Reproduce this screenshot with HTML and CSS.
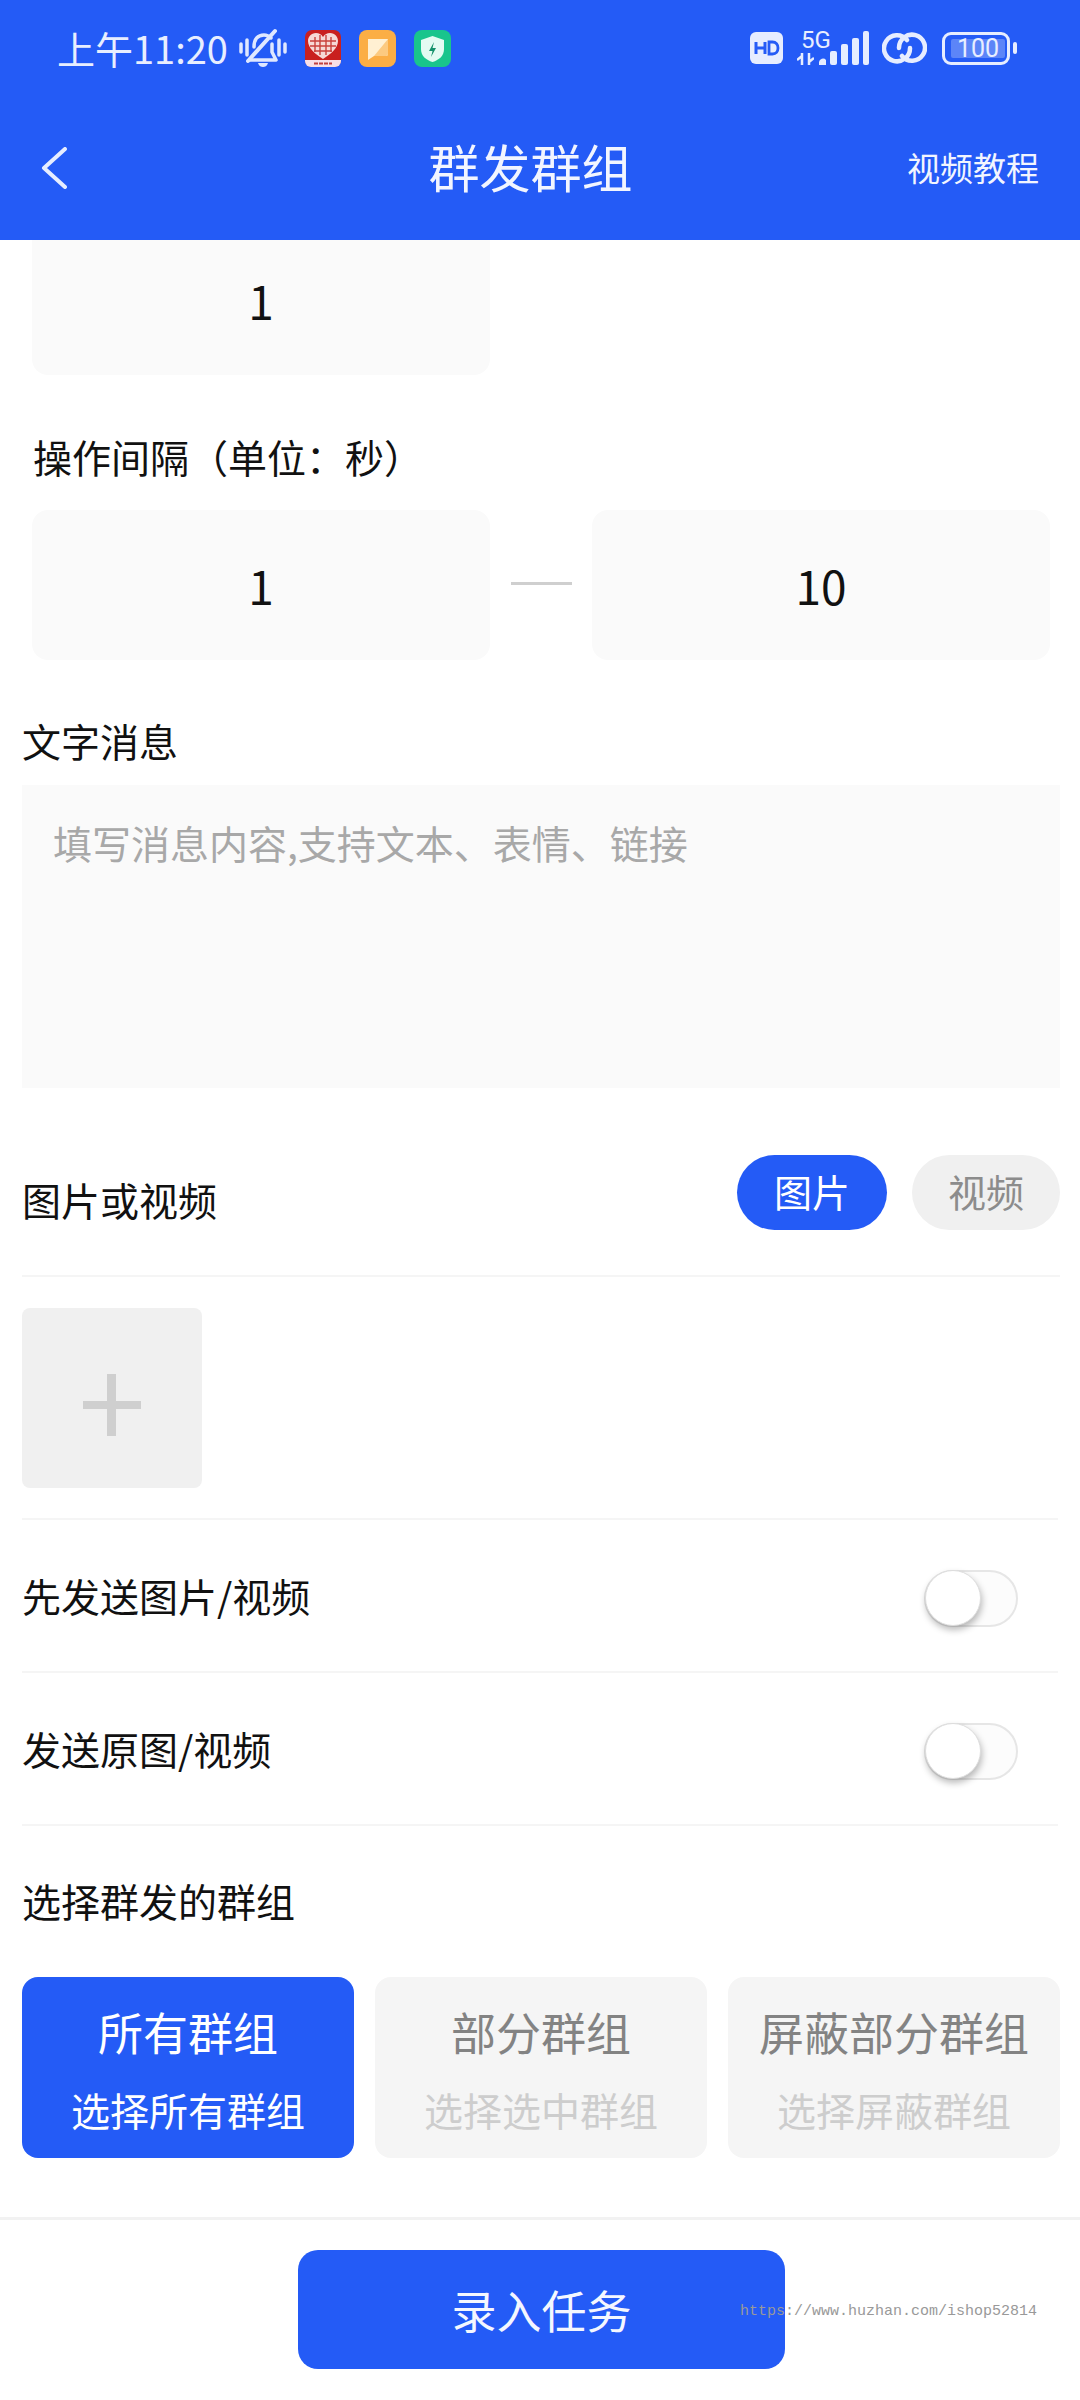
FILE: index.html
```html
<!DOCTYPE html>
<html lang="zh-CN">
  <head>
    <meta charset="UTF-8" />
    <title>群发群组</title>
    <link rel="stylesheet" href="styles.css">
  </head>
  <body>
    <div class="page">
      <div class="topbar">
        <div class="status">
          <span class="time">上午11:20</span>
          <svg class="ic-bell" viewBox="0 0 48 40" width="48" height="40">
            <path d="M2 16v8M8 12v15M40 12v15M46 16v8" stroke="#dfe8ff" stroke-width="3.5" stroke-linecap="round" fill="none"/>
            <path d="M15 19c0-8 4-12 10-12 3 0 5 1 7 3M33 16v8l4 8H11" stroke="#dfe8ff" stroke-width="3.5" stroke-linecap="round" stroke-linejoin="round" fill="none"/>
            <path d="M9 33 36 3" stroke="#dfe8ff" stroke-width="4" stroke-linecap="round"/>
            <path d="M19 35h10c-1 3-3 4-5 4s-4-1-5-4z" fill="#dfe8ff"/>
          </svg>
          <svg class="ic-app ic-pdd" viewBox="0 0 36 37" width="36" height="37">
            <rect width="36" height="37" rx="7" fill="#c9201f"/>
            <path d="M18 29C10 24 3 18 3 11c0-4 3-8 8-8 3 0 5 1 7 4 2-3 4-4 7-4 5 0 8 4 8 8 0 7-7 13-15 18z" fill="#f6d9d6"/>
            <path d="M10 7v15M15 5v20M21 5v20M26 7v15M5 11h26M5 16h26M9 21h18" stroke="#c9403c" stroke-width="1.4" fill="none"/>
            <path d="M0 30h36v1a6 6 0 0 1-6 6H6a6 6 0 0 1-6-6z" fill="#f7dfe6"/>
            <path d="M9 33.5h18" stroke="#c0413f" stroke-width="2.2" stroke-dasharray="4 1"/>
          </svg>
          <svg class="ic-app ic-note" viewBox="0 0 37 37" width="37" height="37">
            <rect width="37" height="37" rx="8" fill="#fbae45"/>
            <path d="M9 9h20v15a2 2 0 0 1-2 2H15l-6 4z" fill="#fff0d2"/>
            <path d="M29 9v15a2 2 0 0 1-2 2H15z" fill="#fcca80"/>
          </svg>
          <svg class="ic-app ic-safe" viewBox="0 0 37 37" width="37" height="37">
            <rect width="37" height="37" rx="8" fill="#19c58c"/>
            <path d="M18.5 6 30 10v9c0 7-5 11-11.5 13C12 30 7 26 7 19v-9z" fill="#e4fbf2"/>
            <path d="M20 12l-5 9h3.500l-1.500 6 5-9h-3.500z" fill="#14916b"/>
          </svg>
          <span class="status-gap"></span>
          <svg class="ic-hd" viewBox="0 0 33 32" width="33" height="32">
            <rect width="33" height="32" rx="6" fill="#e6edff"/>
            <path d="M6 10v12M15 10v12M6 16h9" stroke="#245bf6" stroke-width="3" fill="none"/>
            <path d="M19 10v12h3.500c3.500 0 5.500-2.500 5.500-6s-2-6-5.500-6z" stroke="#245bf6" stroke-width="2.800" fill="none"/>
          </svg>
          <div class="net">
            <span class="net-5g">5G</span>
            <svg viewBox="0 0 17 12" width="17" height="12">
              <path d="M5 0v12M0 7l5-4M12 0v12M17 5l-5 4" stroke="#e6edff" stroke-width="2.500" fill="none"/>
            </svg>
          </div>
          <svg class="ic-signal" viewBox="0 0 51 34" width="51" height="34">
            <path d="M1 34v-3a4 4 0 0 1 7-2v5z" fill="#e6edff"/>
            <rect x="12" y="20" width="7" height="14" rx="2" fill="#e6edff"/>
            <rect x="23" y="13" width="7" height="21" rx="2" fill="#e6edff"/>
            <rect x="34" y="7" width="7" height="27" rx="2" fill="#e6edff"/>
            <rect x="45" y="0" width="6" height="34" rx="2" fill="#e6edff"/>
          </svg>
          <svg class="ic-link" viewBox="0 0 45 32" width="45" height="32">
            <path d="M25 8A13 13 0 1 0 28 16" stroke="#e6edff" stroke-width="4.500" stroke-linecap="round" fill="none"/>
            <path d="M20 24A13 13 0 1 0 17 16" stroke="#e6edff" stroke-width="4.500" stroke-linecap="round" fill="none"/>
          </svg>
          <div class="battery">
            <div class="battery-body"><span class="battery-fill">100</span></div>
            <span class="battery-nub"></span>
          </div>
        </div>
        <div class="nav">
          <div class="nav-back">
            <svg viewBox="0 0 26 42" width="26" height="42">
              <path d="M24 2 3 21l21 19" stroke="#e6edff" stroke-width="4" stroke-linecap="round" stroke-linejoin="round" fill="none"/>
            </svg>
          </div>
          <div class="nav-title">群发群组</div>
          <div class="nav-link">视频教程</div>
        </div>
      </div>

      <div class="main">
        <div class="num-row num-row-cut">
          <div class="num-box num-box-cut">1</div>
        </div>
        <div class="label label-inset">操作间隔（单位：秒）</div>
        <div class="num-row">
          <div class="num-box">1</div>
          <span class="dash"></span>
          <div class="num-box">10</div>
        </div>

        <div class="section">
          <div class="label label-msg">文字消息</div>
          <div class="textarea">填写消息内容,支持文本、表情、链接</div>

          <div class="row media-row">
            <div class="label media-label">图片或视频</div>
            <div class="pills">
              <span class="pill pill-on">图片</span>
              <span class="pill">视频</span>
            </div>
          </div>

          <div class="row upload-row">
            <div class="upload">
              <svg viewBox="0 0 58 62" width="58" height="62">
                <path d="M24 0h9v62h-9z" fill="#cfcfcf"/>
                <path d="M0 27h58v8H0z" fill="#cfcfcf"/>
              </svg>
            </div>
          </div>

          <div class="row switch-row">
            <span class="switch-label">先发送图片/视频</span>
            <div class="switch"><span class="thumb"></span></div>
          </div>
          <div class="row switch-row">
            <span class="switch-label">发送原图/视频</span>
            <div class="switch"><span class="thumb"></span></div>
          </div>

          <div class="label label-group">选择群发的群组</div>
          <div class="groups">
            <div class="card card-on">
              <div class="card-title">所有群组</div>
              <div class="card-sub">选择所有群组</div>
            </div>
            <div class="card">
              <div class="card-title">部分群组</div>
              <div class="card-sub">选择选中群组</div>
            </div>
            <div class="card">
              <div class="card-title">屏蔽部分群组</div>
              <div class="card-sub">选择屏蔽群组</div>
            </div>
          </div>
        </div>
      </div>

      <div class="footer">
        <button class="submit">录入任务</button>
        <span class="watermark">https://www.huzhan.com/ishop52814</span>
      </div>
    </div>
  </body>
</html>
```

FILE: styles.css
```css
* {
  box-sizing: border-box;
}
body {
  margin: 0;
  background-color: #fff;
  color: #111;
  font-family: "Noto Sans CJK SC", "Noto Sans", sans-serif;
}
.page {
  position: relative;
  display: flex;
  flex-direction: column;
  width: 1080px;
  height: 2400px;
  overflow: hidden;
}

/* blue header */
.topbar {
  height: 240px;
  background-color: #245bf6;
  color: #e8eeff;
}
.status {
  display: flex;
  align-items: center;
  height: 96px;
  padding-left: 57px;
}
.time {
  width: 182px;
  font-size: 38px;
  line-height: 48px;
  white-space: nowrap;
}
.ic-app {
  margin-left: 18px;
}
.status-gap {
  flex: 1;
}
.net {
  display: flex;
  flex-direction: column;
  align-items: flex-start;
  width: 21px;
  margin-left: 14px;
}
.net-5g {
  width: 32px;
  margin: -2px 0 3px 4px;
  font-family: Roboto, sans-serif;
  font-size: 24px;
  line-height: 20px;
}
.ic-link {
  margin-left: 13px;
}
.battery {
  display: flex;
  align-items: center;
  margin: 0 63px 0 15px;
}
.battery-body {
  width: 68px;
  height: 33px;
  padding: 4px 6px;
  border: 3px solid #e6edff;
  border-radius: 9px;
}
.battery-fill {
  display: block;
  width: 54px;
  height: 19px;
  background-color: #5c85f8;
  border-radius: 2px;
  font-family: Roboto, sans-serif;
  font-size: 25px;
  line-height: 19px;
  text-align: center;
}
.battery-nub {
  width: 4px;
  height: 12px;
  margin-left: 3px;
  background-color: #e6edff;
  border-radius: 2px;
}
.nav {
  display: flex;
  align-items: center;
  height: 144px;
}
.nav-back {
  display: flex;
  width: 154px;
  padding-left: 41px;
}
.nav-title {
  flex: 1;
  margin-bottom: 5px;
  color: #f2f5ff;
  font-size: 51px;
  text-align: center;
}
.nav-link {
  width: 173px;
  margin-bottom: 3px;
  padding-right: 41px;
  color: #f2f5ff;
  font-size: 33px;
  text-align: right;
}

/* form */
.label {
  font-size: 39px;
  line-height: 60px;
}
.label-inset {
  margin-top: 51px;
  padding-left: 33px;
}
.num-row {
  display: flex;
  align-items: center;
  margin-top: 24px;
  padding: 0 30px 0 32px;
}
.num-row-cut {
  margin-top: 0;
}
.num-box {
  display: flex;
  align-items: center;
  justify-content: center;
  width: 458px;
  height: 150px;
  background-color: #fafafa;
  border-radius: 16px;
  font-size: 46px;
}
.num-box-cut {
  height: 135px;
  padding-bottom: 16px;
  border-radius: 0 0 16px 16px;
}
.dash {
  width: 61px;
  height: 3px;
  margin: 0 20px 4px 21px;
  background-color: #cfcfcf;
}
.section {
  padding: 0 20px 0 22px;
}
.label-msg {
  margin-top: 50px;
}
.textarea {
  height: 303px;
  margin-top: 15px;
  padding: 27px 0 0 31px;
  background-color: #fafafa;
  color: #a8a8a8;
  font-size: 39px;
  line-height: 60px;
}
.row {
  border-bottom: 2px solid #f5f5f5;
  margin-right: 2px;
}
.media-row {
  display: flex;
  justify-content: space-between;
  height: 189px;
  margin-right: 0;
  padding-top: 67px;
}
.media-label {
  margin-top: 14px;
}
.pills {
  display: flex;
  gap: 25px;
}
.pill {
  width: 148px;
  height: 75px;
  background-color: #f0f0f0;
  border-radius: 38px;
  color: #8c8c8c;
  font-size: 38px;
  line-height: 72px;
  text-align: center;
}
.pill-on {
  width: 150px;
  background-color: #245bf6;
  color: #fff;
}
.upload-row {
  height: 243px;
  padding-top: 31px;
}
.upload {
  display: flex;
  align-items: center;
  justify-content: center;
  width: 180px;
  height: 180px;
  padding-top: 14px;
  background-color: #f0f0f0;
  border-radius: 8px;
}
.switch-row {
  display: flex;
  align-items: center;
  justify-content: space-between;
  height: 153px;
  padding: 0 40px 0 0;
}
.switch-label {
  margin-bottom: 2px;
  font-size: 39px;
}
.switch {
  display: flex;
  align-items: center;
  width: 94px;
  height: 57px;
  margin-top: 5px;
  background-color: #fcfcfc;
  border: 2px solid #e6e6e6;
  border-radius: 29px;
}
.thumb {
  width: 56px;
  height: 56px;
  margin-left: -1px;
  background-color: #fff;
  border: 1px solid #ddd;
  border-radius: 50%;
  box-shadow: 1px 4px 7px rgba(0, 0, 0, 0.28);
}
.label-group {
  margin-top: 44px;
}
.groups {
  display: grid;
  grid-template-columns: repeat(3, 1fr);
  gap: 21px;
  margin-top: 47px;
}
.card {
  height: 181px;
  padding-top: 25px;
  background-color: #f5f5f5;
  border-radius: 16px;
  text-align: center;
}
.card-on {
  background-color: #245bf6;
}
.card-title {
  color: #838383;
  font-size: 45px;
  line-height: 60px;
}
.card-sub {
  margin-top: 19px;
  color: #cdcdcd;
  font-size: 39px;
  line-height: 56px;
}
.card-on .card-title,
.card-on .card-sub {
  color: #fff;
}

/* bottom bar */
.footer {
  display: flex;
  justify-content: center;
  height: 183px;
  margin-top: auto;
  padding: 30px 0 0 3px;
  border-top: 3px solid #f2f2f2;
}
.submit {
  width: 487px;
  height: 119px;
  background-color: #245bf6;
  border: none;
  border-radius: 20px;
  color: #f4f7ff;
  font-family: inherit;
  font-size: 45px;
}
.watermark {
  position: absolute;
  left: 740px;
  top: 2302px;
  color: #999;
  font-family: "Liberation Mono", monospace;
  font-size: 15px;
  line-height: 20px;
  white-space: nowrap;
}
```
